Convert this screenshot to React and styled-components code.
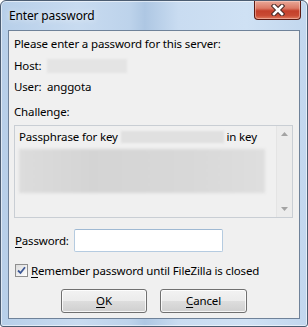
import React from "react";
import styled, { createGlobalStyle } from "styled-components";

const GlobalStyle = createGlobalStyle`
  html, body {
    margin: 0;
    padding: 0;
    background: #ffffff;
  }
  body {
    font-family: "Segoe UI", "Noto Sans", "Open Sans", sans-serif;
    font-size: 11.5px;
    letter-spacing: -0.15px;
    color: #000;
  }
`;

const Frame = styled.div`
  width: 308px;
  height: 327px;
  box-sizing: border-box;
  border: 1px solid #4c5d72;
  border-radius: 6px 6px 3px 3px;
  box-shadow: inset 0 0 0 1px rgba(255, 255, 255, 0.55);
  background: linear-gradient(
    90deg,
    #b7cfe9 0%,
    #c8dbf0 25%,
    #bdd3eb 42%,
    #aec7e3 47%,
    #c9dcf1 58%,
    #cfe1f4 80%,
    #c2d7ee 100%
  );
  display: flex;
  flex-direction: column;
  padding: 0 7px 7px 7px;
`;

const TitleBar = styled.div`
  height: 29px;
  display: flex;
  justify-content: space-between;
  align-items: flex-start;
`;

const TitleText = styled.span`
  margin-top: 7px;
  margin-left: 1px;
  font-size: 12px;
  line-height: 16px;
  color: #000;
  text-shadow: 0 0 6px rgba(255, 255, 255, 0.9);
`;

const CloseButton = styled.div`
  width: 47px;
  height: 19px;
  margin-right: -1px;
  box-sizing: border-box;
  border: 1px solid #5c1a12;
  border-top: none;
  border-radius: 0 0 4px 4px;
  background: linear-gradient(
    180deg,
    #e9a898 0%,
    #dc7a66 40%,
    #c4402b 55%,
    #c94a33 80%,
    #df7a5e 100%
  );
  box-shadow: inset 0 0 0 1px rgba(255, 220, 210, 0.45);
  display: flex;
  align-items: center;
  justify-content: center;
`;

const Client = styled.div`
  flex: 1;
  box-sizing: border-box;
  border: 1px solid #6f8299;
  background: #f0f0f0;
  display: flex;
  flex-direction: column;
  padding: 5px 0 0 5px;
`;

const Line = styled.div`
  height: 16px;
  line-height: 16px;
  margin-top: ${(p) => p.$mt || 0}px;
  display: flex;
  align-items: center;
  white-space: nowrap;
`;

const Label = styled.span`
  width: ${(p) => p.$w || "auto"};
  display: inline-block;
`;

const Blur = styled.span`
  display: inline-block;
  width: ${(p) => p.$w}px;
  height: ${(p) => p.$h}px;
  background: ${(p) => p.$c || "#e2e2e2"};
  filter: blur(${(p) => p.$b || 1}px);
`;

const ChallengeBox = styled.div`
  margin-top: 5px;
  width: 279px;
  height: 93px;
  box-sizing: border-box;
  border: 1px solid #c9ced4;
  background: #f0f0f0;
  display: flex;
`;

const ChallengeText = styled.div`
  flex: 1;
  padding: 3px 0 0 4px;
  display: flex;
  flex-direction: column;
`;

const BlurBlock = styled.div`
  margin-top: 4px;
  width: 246px;
  height: 44px;
  background: linear-gradient(90deg, #dcdcdc, #d4d4d4 30%, #d8d8d8 70%, #dedede);
  filter: blur(1.5px);
`;

const ScrollBar = styled.div`
  width: 16px;
  box-sizing: border-box;
  border-left: 1px solid #e4e4e4;
  background: #ececec;
  display: flex;
  flex-direction: column;
  justify-content: space-between;
  align-items: center;
  padding: 6px 0 6px 0;
`;

const PasswordRow = styled.div`
  margin-top: 11px;
  height: 23px;
  display: flex;
  align-items: center;
`;

const PasswordLabel = styled.span`
  width: 59px;
  padding-left: 1px;
`;

const TextInput = styled.div`
  width: 149px;
  height: 23px;
  box-sizing: border-box;
  background: #ffffff;
  border: 1px solid #b5cbe0;
  border-top-color: #9fb9d3;
  border-radius: 2px;
`;

const CheckRow = styled.div`
  margin-top: 10px;
  height: 16px;
  display: flex;
  align-items: center;
  padding-left: 1px;
  white-space: nowrap;
`;

const CheckBox = styled.span`
  width: 13px;
  height: 13px;
  box-sizing: border-box;
  border: 1px solid #8f8f8f;
  background: linear-gradient(135deg, #dcdcdc, #ffffff);
  display: inline-flex;
  align-items: center;
  justify-content: center;
  margin-right: 3px;
`;

const ButtonRow = styled.div`
  margin-top: 11px;
  margin-left: -5px;
  display: flex;
  justify-content: center;
  gap: 13px;
`;

const Button = styled.div`
  width: ${(p) => p.$w}px;
  height: 24px;
  box-sizing: border-box;
  border: 1px solid #707070;
  border-radius: 3px;
  background: linear-gradient(180deg, #f2f2f2 0%, #ebebeb 50%, #dddddd 51%, #cfcfcf 100%);
  box-shadow: inset 0 0 0 1px rgba(255, 255, 255, 0.8);
  display: flex;
  align-items: center;
  justify-content: center;
  line-height: 16px;
`;

const U = styled.span`
  text-decoration: underline;
  text-underline-offset: 2px;
`;

const CloseIcon = () => (
  <svg width="14" height="12" viewBox="0 0 14 12">
    <path d="M3 2 L11 10 M11 2 L3 10" stroke="#4a2a26" strokeWidth="4.6" strokeLinecap="square" />
    <path d="M3 2 L11 10 M11 2 L3 10" stroke="#ffffff" strokeWidth="2.6" strokeLinecap="square" />
  </svg>
);

const Arrow = ({ down }) => (
  <svg width="7" height="4" viewBox="0 0 7 4">
    <path d={down ? "M0 0 H7 L3.5 4 Z" : "M0 4 H7 L3.5 0 Z"} fill="#a3a3a3" />
  </svg>
);

const Check = () => (
  <svg width="9" height="9" viewBox="0 0 9 9">
    <path d="M1 4.5 L3.5 7 L8 1.2" fill="none" stroke="#3d5896" strokeWidth="1.8" />
  </svg>
);

export default function App() {
  return (
    <>
      <GlobalStyle />
      <Frame>
        <TitleBar>
          <TitleText>Enter password</TitleText>
          <CloseButton>
            <CloseIcon />
          </CloseButton>
        </TitleBar>
        <Client>
          <Line>Please enter a password for this server:</Line>
          <Line $mt={6}>
            <Label $w="33px">Host:</Label>
            <Blur $w={80} $h={14} $c="#e4e4e4" />
          </Line>
          <Line $mt={5}>
            <Label $w="33px">User:</Label>
            anggota
          </Line>
          <Line $mt={9}>Challenge:</Line>
          <ChallengeBox>
            <ChallengeText>
              <Line>
                Passphrase for key&nbsp;
                <Blur $w={103} $h={12} $c="#e0e0e0" />
                &nbsp;in key
              </Line>
              <BlurBlock />
            </ChallengeText>
            <ScrollBar>
              <Arrow />
              <Arrow down />
            </ScrollBar>
          </ChallengeBox>
          <PasswordRow>
            <PasswordLabel>
              <U>P</U>assword:
            </PasswordLabel>
            <TextInput />
          </PasswordRow>
          <CheckRow>
            <CheckBox>
              <Check />
            </CheckBox>
            <span>
              <U>R</U>emember password until FileZilla is closed
            </span>
          </CheckRow>
          <ButtonRow>
            <Button $w={86}>
              <span>
                <U>O</U>K
              </span>
            </Button>
            <Button $w={87}>
              <span>
                <U>C</U>ancel
              </span>
            </Button>
          </ButtonRow>
        </Client>
      </Frame>
    </>
  );
}
